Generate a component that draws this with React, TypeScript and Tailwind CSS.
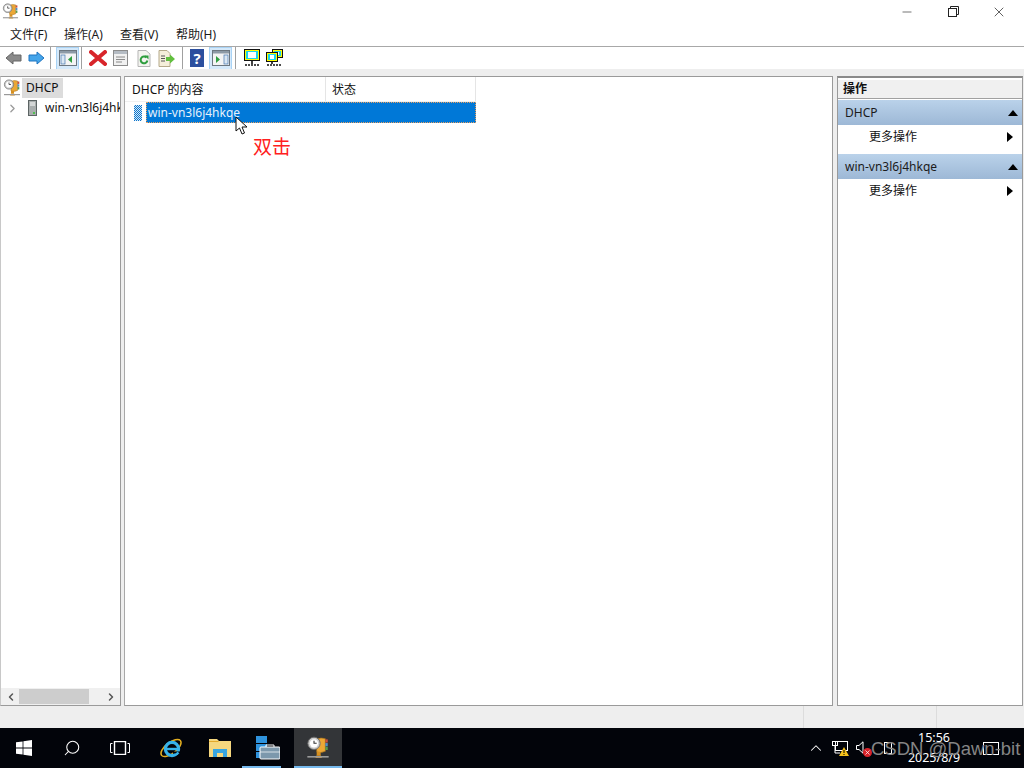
import { ChevronLeft, ChevronRight, ChevronUp, Search, X, Minus } from "lucide-react";

const font = { fontFamily: '"Noto Sans", "Noto Sans CJK SC", sans-serif' };

function Trophy({ size = 18 }: { size?: number }) {
  return (
    <svg width={size} height={size} viewBox="0 0 18 18">
      <path d="M8 2.5Q11 .8 14.5 2V11.5Q11 13 8 12Z" fill="#eba735" stroke="#a56f1c" strokeWidth="0.5" />
      <rect x="14.5" y="2.5" width="1.8" height="2.4" fill="#c9503c" />
      <rect x="14.5" y="5.3" width="1.8" height="2.4" fill="#4f8fc9" />
      <rect x="14.5" y="8.1" width="1.8" height="2.4" fill="#5a9a4a" />
      <circle cx="6" cy="5.5" r="4.6" fill="#cfcfcf" stroke="#6a6a6a" strokeWidth="0.7" />
      <circle cx="6" cy="5.5" r="3.1" fill="#fff" />
      <path d="M6 3.5V5.5H8" fill="none" stroke="#333" strokeWidth="0.8" />
      <rect x="8" y="12" width="3" height="2.5" fill="#d68f1f" />
      <path d="M7 16.5L8 14.5H11L12 16.5Z" fill="#d68f1f" />
      <rect x="1" y="15" width="16" height="1.2" fill="#9a9a9a" />
    </svg>
  );
}

function ArrowIcon({ color, stroke, flip }: { color: string; stroke: string; flip?: boolean }) {
  return (
    <svg width="17" height="14" viewBox="0 0 17 14" className={flip ? "-scale-x-100" : ""}>
      <path d="M1 7L8 1V4H16V10H8V13Z" fill={color} stroke={stroke} strokeWidth="1" />
    </svg>
  );
}

function PaneIcon({ right }: { right?: boolean }) {
  return (
    <svg width="18" height="16" viewBox="0 0 18 16">
      <rect x="0.5" y="0.5" width="17" height="15" fill="#f4f4f4" stroke="#6d7780" />
      <rect x="1" y="1" width="16" height="2.5" fill="#8d9aa6" />
      {right ? (
        <>
          <path d="M4 6V13L8 9.5Z" fill="#2f9e3f" />
          <rect x="12" y="5" width="4" height="9" fill="#dbe7f3" stroke="#4978b0" strokeWidth="0.7" />
        </>
      ) : (
        <>
          <rect x="2" y="5" width="4" height="9" fill="#dbe7f3" stroke="#4978b0" strokeWidth="0.7" />
          <path d="M13 6V13L9 9.5Z" fill="#2f9e3f" />
        </>
      )}
    </svg>
  );
}

function Sep() {
  return <div className="h-[22px] w-px bg-[#a0a0a0]" />;
}

function Monitor({ x = 0, y = 0, w, h }: { x?: number; y?: number; w: number; h: number }) {
  return (
    <g transform={`translate(${x} ${y})`}>
      <rect x="0.5" y="0.5" width={w - 1} height={h - 1} fill="#ffff00" stroke="#111" strokeWidth="1" />
      <rect x="2" y="2" width={w - 4} height={h - 4} fill="#19d5ee" />
      <rect x="4" y="3" width={w - 8} height={h - 6} fill="#fff" />
    </g>
  );
}

function Toolbar() {
  return (
    <div className="flex h-[22px] shrink-0 items-center bg-white pl-[5px]">
      <ArrowIcon color="#8a8a8a" stroke="#666" />
      <div className="w-[6px]" />
      <ArrowIcon color="#45a5ea" stroke="#1f74c0" flip />
      <div className="mx-[5px]">
        <Sep />
      </div>
      <div className="flex h-[23px] w-[23px] items-center justify-center border border-[#a9d3f5] bg-[#d5e9fa]">
        <PaneIcon />
      </div>
      <div className="ml-[2px] mr-[6px]">
        <Sep />
      </div>
      <div className="flex w-[20px] justify-center">
        <svg width="18" height="16" viewBox="0 0 18 16">
          <path d="M2 2L16 14M16 2L2 14" stroke="#d8252a" strokeWidth="4" strokeLinecap="round" />
        </svg>
      </div>
      <div className="ml-px flex w-[22px] justify-center">
        <svg width="15" height="16" viewBox="0 0 15 16">
          <rect x="0.5" y="0.5" width="14" height="15" fill="#f1f1f1" stroke="#8c8c8c" />
          <rect x="1" y="1" width="13" height="3" fill="#b5bcc4" />
          <path d="M3 7H12M3 9.5H12M3 12H9" stroke="#8a8a8a" strokeWidth="1" />
        </svg>
      </div>
      <div className="ml-px flex w-[24px] justify-center">
        <svg width="14" height="17" viewBox="0 0 14 17">
          <path d="M1 .5H9L13 4V16.5H1Z" fill="#f4f4f0" stroke="#b5b5b5" />
          <path d="M9.5 7.5A3.4 3.4 0 1 0 10.4 10.5" fill="none" stroke="#2f9e3f" strokeWidth="2" />
          <path d="M7.5 5.5H11.5V9.5Z" fill="#2f9e3f" />
        </svg>
      </div>
      <div className="flex w-[21px] justify-center">
        <svg width="18" height="17" viewBox="0 0 18 17">
          <path d="M1 .5H9L12 3.5V16.5H1Z" fill="#f5eeda" stroke="#b5a98a" />
          <path d="M3 6H7M3 8.5H7M3 11H7" stroke="#555" strokeWidth="1" />
          <path d="M8 7H12V4.5L17 9L12 13.5V11H8Z" fill="#62bf3f" />
        </svg>
      </div>
      <div className="ml-[5px] mr-[7px]">
        <Sep />
      </div>
      <div className="flex w-[14px] justify-center">
        <div className="flex h-[18px] w-[14px] items-center justify-center bg-[#2c4f9e] text-[15px] font-bold leading-none text-white">
          ?
        </div>
      </div>
      <div className="ml-[5px] flex h-[23px] w-[23px] items-center justify-center border border-[#a9d3f5] bg-[#d5e9fa]">
        <PaneIcon right />
      </div>
      <div className="ml-[3px] mr-[7px]">
        <Sep />
      </div>
      <div className="flex w-[18px] justify-center">
        <svg width="17" height="18" viewBox="0 0 17 18">
          <Monitor w={16} h={12} />
          <path d="M8 12V15" stroke="#111" strokeWidth="1.6" />
          <path d="M1 16H15" stroke="#111" strokeWidth="1.4" strokeDasharray="2 1" />
        </svg>
      </div>
      <div className="ml-[5px] flex w-[18px] justify-center">
        <svg width="18" height="18" viewBox="0 0 18 18">
          <Monitor x={6} y={0} w={11} h={9} />
          <Monitor x={0} y={3} w={12} h={10} />
          <path d="M6 13V15" stroke="#111" strokeWidth="1.6" />
          <path d="M1 16H16" stroke="#111" strokeWidth="1.4" strokeDasharray="2 1" />
        </svg>
      </div>
    </div>
  );
}

function ActionGroup({ title }: { title: string }) {
  return (
    <div className="mb-[5px]">
      <div className="flex h-[25px] items-center justify-between bg-gradient-to-b from-[#bad2ea] to-[#9db8d6] pl-[7px] pr-[3px] text-[#1b1b1b]">
        <span>{title}</span>
        <svg width="10" height="6" viewBox="0 0 10 6" className="mr-px">
          <path d="M0 6L5 0L10 6Z" fill="#000" />
        </svg>
      </div>
      <div className="flex h-[24px] items-center justify-between pl-[31px] pr-[9px]">
        <span>更多操作</span>
        <svg width="6" height="10" viewBox="0 0 6 10">
          <path d="M0 0L6 5L0 10Z" fill="#000" />
        </svg>
      </div>
    </div>
  );
}

function Taskbar() {
  return (
    <div className="relative flex h-10 shrink-0 items-center bg-[#02040a] text-white">
      <div className="flex w-[48px] justify-center">
        <svg width="16" height="16" viewBox="0 0 16 16" fill="#fff">
          <path d="M0 2.3L6.6 1.4V7.5H0ZM7.4 1.3L16 0V7.5H7.4ZM0 8.4H6.6V14.6L0 13.7ZM7.4 8.4H16V16L7.4 14.7Z" />
        </svg>
      </div>
      <div className="flex w-[48px] justify-center">
        <Search size={18} strokeWidth={1.4} className="-scale-x-100" />
      </div>
      <div className="flex w-[48px] justify-center">
        <svg width="20" height="14" viewBox="0 0 20 14" fill="none" stroke="#fff" strokeWidth="1">
          <rect x="4.5" y="0.5" width="11" height="13" strokeWidth="1.4" />
          <path d="M2.5 2.5H.5V11.5H2.5M17.5 2.5H19.5V11.5H17.5" />
        </svg>
      </div>
      <div className="flex w-[54px] justify-center">
        <svg width="24" height="24" viewBox="0 0 24 24" fill="none">
          <ellipse cx="12" cy="12" rx="12" ry="5.5" transform="rotate(-38 12 12)" stroke="#e2ae21" strokeWidth="1.5" />
          <circle cx="13" cy="13" r="6.6" stroke="#37b3ea" strokeWidth="3.2" />
          <path d="M6.5 13H20" stroke="#37b3ea" strokeWidth="2.4" />
          <path d="M14 15.5H22V18H14Z" fill="#02040a" />
          <path d="M14 19A6.6 6.6 0 0 0 19.5 16.5" stroke="#37b3ea" strokeWidth="2.4" />
        </svg>
      </div>
      <div className="flex w-[44px] justify-center">
        <svg width="22" height="18" viewBox="0 0 22 18">
          <path d="M0 0H8L10 2H22V18H0Z" fill="#f5d77e" />
          <path d="M0 2H9L10 3H0Z" fill="#e3a92b" />
          <path d="M4 18V10H18V18H14V14H8V18Z" fill="#37a5e0" />
        </svg>
      </div>
      <div className="relative flex h-10 w-[52px] items-center justify-center">
        <svg width="24" height="24" viewBox="0 0 24 24">
          <rect x="0" y="0" width="11" height="7" fill="#2f93dd" />
          <rect x="0" y="8" width="11" height="7" fill="#2f93dd" />
          <rect x="0" y="16" width="11" height="6" fill="#2f93dd" />
          <rect x="4" y="11" width="20" height="12" rx="1" fill="#7c98ac" stroke="#fff" strokeWidth="1" />
          <path d="M10 11V9H18V11" fill="none" stroke="#fff" strokeWidth="1" />
          <path d="M4 16H24" stroke="#fff" strokeWidth="0.7" />
        </svg>
        <div className="absolute bottom-0 left-0 h-[2px] w-[39px] bg-[#76b9ed]" />
      </div>
      <div className="relative flex h-10 w-[48px] items-center justify-center bg-[#333538]">
        <Trophy size={24} />
        <div className="absolute inset-x-0 bottom-0 h-[2px] bg-[#76b9ed]" />
      </div>
      <div className="ml-auto flex items-center">
        <ChevronUp size={18} strokeWidth={1.4} className="mr-[7px]" />
        <div className="relative mr-[8px] h-[14px] w-[16px]">
          <svg width="16" height="14" viewBox="0 0 16 14" fill="none" stroke="#fff">
            <rect x="0.5" y="0.5" width="5" height="4" />
            <rect x="3.5" y="0.5" width="12" height="9" />
            <path d="M3 5V12H8" />
          </svg>
          <svg width="10" height="9" viewBox="0 0 10 9" className="absolute -bottom-[1px] -right-[1px]">
            <path d="M5 0L10 9H0Z" fill="#f6c21b" />
            <path d="M5 3V6M5 7V8" stroke="#000" />
          </svg>
        </div>
        <div className="relative mr-[12px] h-[14px] w-[16px]">
          <svg width="8" height="13" viewBox="0 0 8 13" fill="none" stroke="#fff">
            <path d="M0.5 4.5H3L7 .8V12.2L3 8.5H.5Z" />
          </svg>
          <div className="absolute -bottom-[2px] left-[7px] flex h-[9px] w-[9px] items-center justify-center rounded-full bg-[#d8232a]">
            <X size={7} strokeWidth={2.5} />
          </div>
        </div>
        <div className="mr-[12px] h-[12px] w-[8px] border border-white" />
        <div className="flex w-[60px] flex-col items-center text-[12.5px] leading-[20px]">
          <span>15:56</span>
          <span className="whitespace-nowrap">2025/8/9</span>
        </div>
        <div className="ml-[19px] mr-[25px] h-[13px] w-[16px] border border-white" />
      </div>
      <div className="absolute left-[871px] top-[10px] whitespace-nowrap text-[18.5px] leading-[22px] text-[#858585]" style={{ fontFamily: '"Liberation Sans", sans-serif' }}>
        CSDN @Dawn-bit
      </div>
    </div>
  );
}

export default function App() {
  return (
    <div className="flex h-[768px] w-[1024px] flex-col overflow-hidden bg-white text-[12px] text-[#111]" style={font}>
      <div className="flex h-[23px] shrink-0 items-center">
        <div className="ml-[2px] mr-[5px]">
          <Trophy size={17} />
        </div>
        <span>DHCP</span>
        <div className="ml-auto flex items-center">
          <Minus size={14} strokeWidth={1} className="mr-[34px]" />
          <svg width="11" height="11" viewBox="0 0 11 11" fill="none" stroke="#222" className="mr-[32px]">
            <rect x="0.5" y="2.5" width="8" height="8" />
            <path d="M2.5 2.5V.5H10.5V8.5H8.5" />
          </svg>
          <X size={16} strokeWidth={1} className="mr-[17px]" />
        </div>
      </div>
      <div className="flex h-[23px] shrink-0 items-center pl-[10px] text-[#1a1a1a]">
        <span className="w-[54px]">文件(F)</span>
        <span className="w-[56px]">操作(A)</span>
        <span className="w-[56px]">查看(V)</span>
        <span>帮助(H)</span>
      </div>
      <div className="h-px shrink-0 bg-[#a8a8a8]" />
      <Toolbar />
      <div className="flex min-h-0 flex-1 flex-col bg-[#eeeeee]">
        <div className="flex min-h-0 flex-1 gap-[3px] pt-[7px]">
          <div className="flex w-[121px] flex-col border border-[#9a9a9a] border-l-[#c8c8c8] bg-white">
            <div className="flex-1 overflow-hidden">
              <div className="flex h-[21px] items-center pl-[2px]">
                <Trophy size={18} />
                <span className="ml-px flex h-[20px] items-center bg-[#dcdcdc] px-[4px]">DHCP</span>
              </div>
              <div className="flex h-[20px] items-center whitespace-nowrap">
                <ChevronRight size={13} strokeWidth={2.4} className="ml-[5px] shrink-0 text-[#9a9a9a]" />
                <svg width="9" height="16" viewBox="0 0 9 16" className="ml-[9px] shrink-0">
                  <rect x="0.5" y="0.5" width="8" height="15" fill="#a9aeae" stroke="#5c6464" />
                  <path d="M2 3H7M2 5H7" stroke="#fff" />
                  <rect x="5" y="12" width="2" height="2" fill="#4fc04f" />
                </svg>
                <span className="ml-[8px]">win-vn3l6j4hkqe</span>
              </div>
            </div>
            <div className="flex h-[17px] items-center bg-[#f0f0f0]">
              <ChevronLeft size={12} strokeWidth={3} className="ml-[4px] text-[#555]" />
              <div className="ml-[2px] h-[15px] w-[70px] bg-[#cdcdcd]" />
              <ChevronRight size={12} strokeWidth={3} className="ml-auto mr-[3px] text-[#555]" />
            </div>
          </div>
          <div className="relative w-[709px] border border-[#9a9a9a] border-l-[#a8a8a8] bg-white">
            <div className="flex h-[25px] w-[351px] border-b border-[#f0f0f0]">
              <div className="flex w-[201px] items-center border-r border-[#e5e5e5] pl-[7px] pt-px">DHCP 的内容</div>
              <div className="flex flex-1 items-center border-r border-[#e5e5e5] pl-[6px] pt-px">状态</div>
            </div>
            <div className="flex h-[21px] w-[351px] items-center">
              <div className="ml-[9px] mr-[4px] h-[16px] w-[8px] bg-[repeating-conic-gradient(#0f74cc_0_25%,#d5ebf8_0_50%)] bg-[length:2px_2px]" />
              <div className="flex h-[21px] flex-1 items-center border border-dotted border-[#e8a060] bg-[#0078d7] pl-px text-[#e6f1fb]">
                win-vn3l6j4hkqe
              </div>
            </div>
            <svg width="14" height="20" viewBox="0 0 14 20" className="absolute left-[110px] top-[39px]">
              <path d="M1 1V15L4.5 12L7 18L9.5 17L7 11H12Z" fill="#fff" stroke="#111" strokeWidth="1" />
            </svg>
            <div className="absolute left-[128px] top-[57px] text-[19px] leading-[26px] text-[#ff2020]">双击</div>
          </div>
          <div className="ml-[1px] flex w-[186px] flex-col border border-[#9a9a9a] border-t-2 border-t-[#8a8a8a] bg-white pt-[2px]">
            <div className="flex h-[19px] items-center border-b border-[#a0a0a0] bg-[#f0f0f0] pl-[5px] font-bold">操作</div>
            <div className="pt-px">
              <ActionGroup title="DHCP" />
              <ActionGroup title="win-vn3l6j4hkqe" />
            </div>
          </div>
        </div>
        <div className="flex h-[22px] shrink-0">
          <div className="flex-1" />
          <div className="w-[134px] border-x border-[#dcdcdc]" />
          <div className="w-[87px]" />
        </div>
      </div>
      <Taskbar />
    </div>
  );
}
